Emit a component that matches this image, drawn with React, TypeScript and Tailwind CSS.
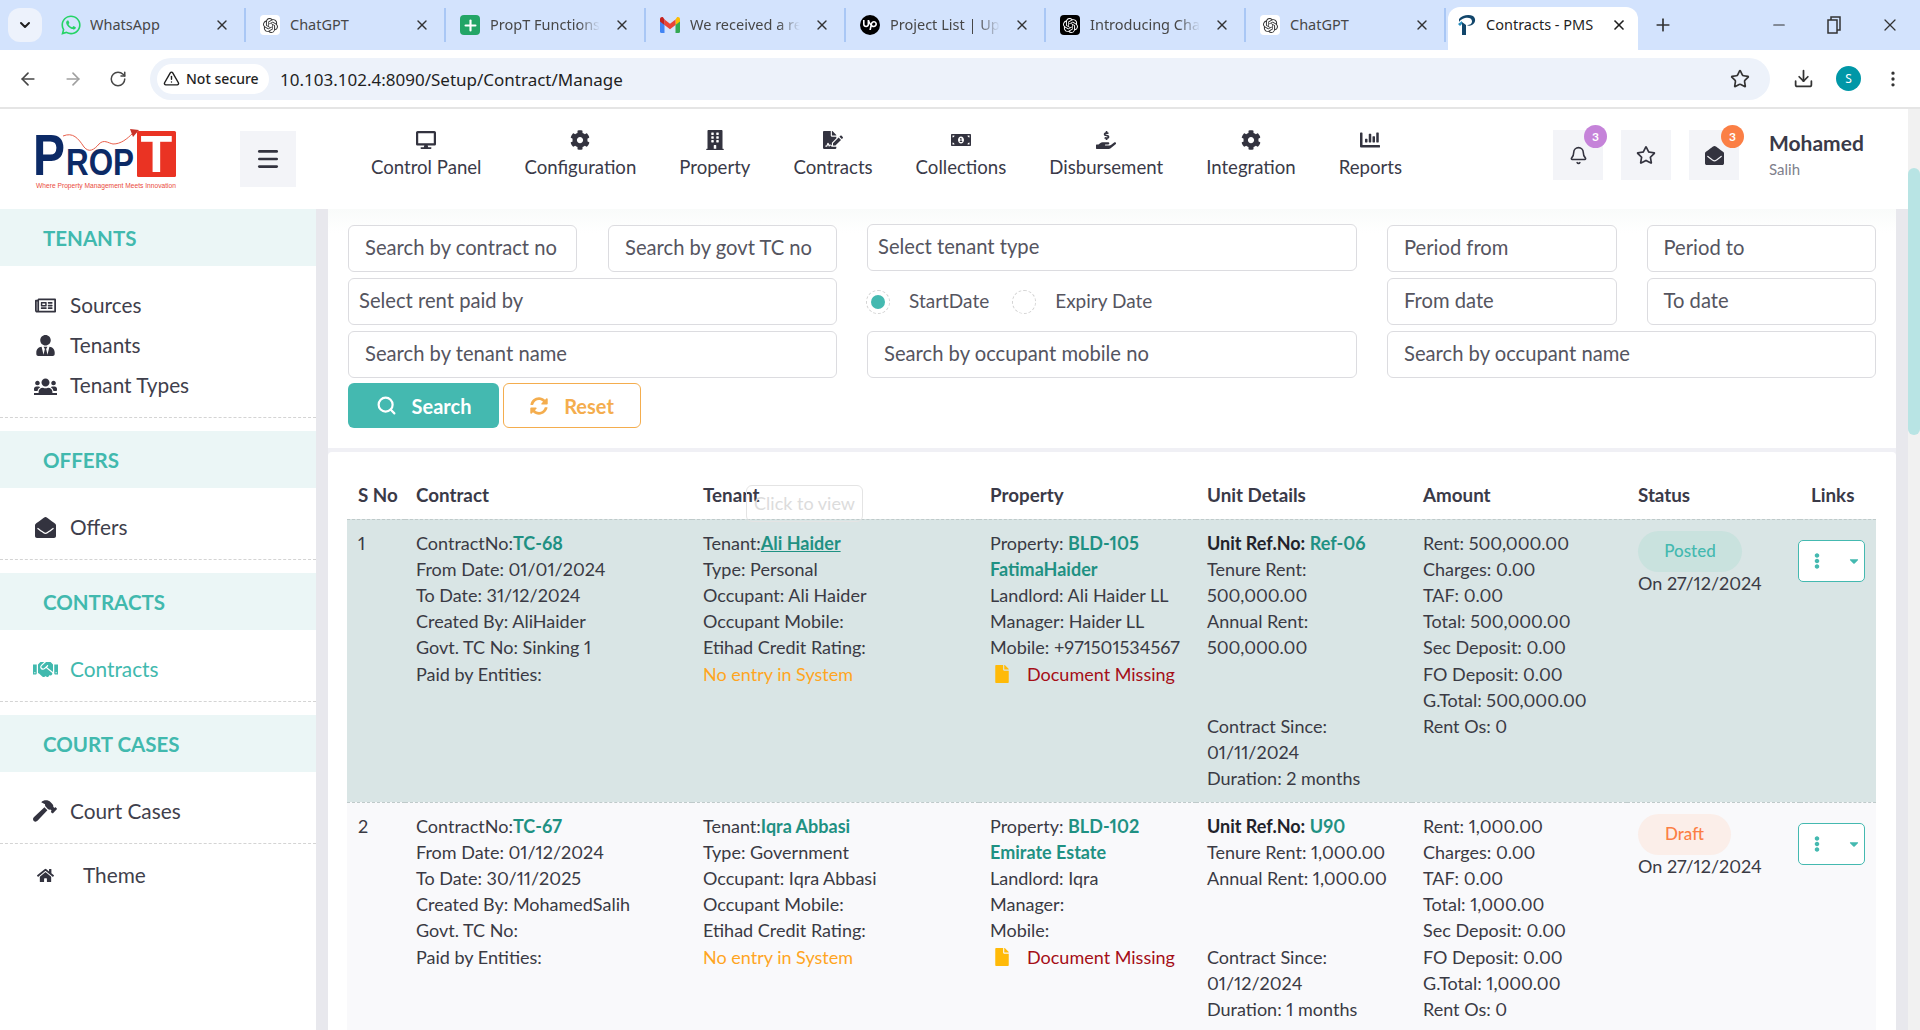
import React from 'react';
import { ArrowLeft, ArrowRight, RotateCw, Star, Download, MoreVertical, X, Plus, Minus, ChevronDown, TriangleAlert, Search, Bell, Menu } from 'lucide-react';
import {
  FaDesktop, FaCog, FaBuilding, FaFileSignature, FaMoneyBillAlt, FaHandHoldingUsd, FaChartBar,
  FaRegNewspaper, FaUserTie, FaUsers, FaEnvelopeOpen, FaHandshake, FaHammer, FaHome, FaSyncAlt,
  FaFile, FaEllipsisV, FaCaretDown, FaRegStar, FaWhatsapp,
} from 'react-icons/fa';
import { SiOpenai, SiUpwork } from 'react-icons/si';

const GptIcon = ({ dark }: { dark?: boolean }) => (
  <span className={`flex h-5 w-5 items-center justify-center rounded ${dark ? 'bg-black text-white' : 'bg-white text-[#333]'}`}>
    <SiOpenai size={15} />
  </span>
);

const SheetIcon = () => (
  <span className="flex h-5 w-5 items-center justify-center rounded-sm bg-[#23a566]">
    <Plus size={17} strokeWidth={3} className="text-white" />
  </span>
);

const GmailIcon = () => (
  <svg width="20" height="16" viewBox="0 0 20 16">
    <path d="M0 2v12.500A1.500 1.500 0 0 0 1.500 16H4.500V7z" fill="#4285f4" />
    <path d="M20 2v12.500a1.500 1.500 0 0 1-1.500 1.500H15.500V7z" fill="#34a853" />
    <path d="M15.500 2.500V8L20 4.500V2c0-1.800-2-2.500-3.200-1.600z" fill="#fbbc04" />
    <path d="M4.500 8V2.500L10 6.700l5.500-4.200V8L10 12.200z" fill="#ea4335" />
    <path d="M0 2v2.500L4.500 8V2.500L3.200.4C2 -.5 0 .2 0 2z" fill="#c5221f" />
  </svg>
);

const UpworkIcon = () => (
  <span className="flex h-5 w-5 items-center justify-center rounded-full bg-black text-white">
    <SiUpwork size={14} />
  </span>
);

const PmsIcon = () => (
  <svg width="20" height="22" viewBox="0 0 20 22">
    <path d="M2 5C5 1 12 0 16 2c3 2 3 7-1 9-2 1-4 1-5 0 3 0 5-1 5-4 0-3-4-4-7-3C5 5 3 6 2 8z" fill="#12466b" />
    <path d="M5 8l4 3v10H5z" fill="#12466b" />
    <path d="M1 10l4-3v3L3 12z" fill="#2a8fc0" />
  </svg>
);

const tabs = [
  { title: 'WhatsApp', icon: <FaWhatsapp size={22} className="text-[#25d366]" /> },
  { title: 'ChatGPT', icon: <GptIcon /> },
  { title: 'PropT Functions', icon: <SheetIcon />, fade: true },
  { title: 'We received a request', icon: <GmailIcon />, fade: true },
  { title: 'Project List | Upwork', icon: <UpworkIcon />, fade: true },
  { title: 'Introducing ChatGPT', icon: <GptIcon dark />, fade: true },
  { title: 'ChatGPT', icon: <GptIcon /> },
];

const BrowserChrome = () => (
  <div className="shrink-0 font-['Noto_Sans',sans-serif]">
    <div className="flex h-[50px] items-center bg-[#d3e3fd] pl-2">
      <div className="mr-[4px] flex h-[34px] w-[34px] items-center justify-center rounded-xl bg-[#edf2fc]">
        <ChevronDown size={16} strokeWidth={3} className="text-[#1f1f1f]" />
      </div>
      {tabs.map((tab, i) => (
        <div key={i} className="flex h-[34px] w-[200px] items-center border-r-2 border-[#a9c7f5] pl-[14px]">
          <span className="flex w-[30px] shrink-0 items-center">{tab.icon}</span>
          <span className={`w-[110px] overflow-hidden whitespace-nowrap text-[14.500px] text-[#474747] ${tab.fade ? '[mask-image:linear-gradient(to_right,black_80%,transparent)]' : ''}`}>
            {tab.title}
          </span>
          <X size={16} strokeWidth={2} className="ml-[14px] text-[#333]" />
        </div>
      ))}
      <div className="ml-[2px] flex h-[43px] w-[190px] items-center self-end rounded-t-[12px] bg-white pb-[7px] pl-[9px]">
        <span className="flex w-[29px] shrink-0"><PmsIcon /></span>
        <span className="w-[125px] whitespace-nowrap text-[14.500px] text-[#1f1f1f]">Contracts - PMS</span>
        <X size={16} strokeWidth={2.500} className="text-[#1f1f1f]" />
      </div>
      <Plus size={20} strokeWidth={2} className="ml-[15px] text-[#333]" />
      <div className="ml-auto flex items-center gap-[38px] pr-[20px] text-[#333]">
        <Minus size={18} strokeWidth={1.500} />
        <svg width="16" height="20" viewBox="0 0 16 20" fill="none" stroke="currentColor" strokeWidth="1.500"><rect x="2" y="5" width="9" height="13" /><path d="M5 5V2h9v13h-3" /></svg>
        <X size={20} strokeWidth={1.500} />
      </div>
    </div>
    <div className="flex h-[59px] items-center border-b-2 border-[#e5e5e5] bg-white">
      <ArrowLeft size={20} className="ml-[18px] text-[#474747]" />
      <ArrowRight size={20} className="ml-[25px] text-[#a0a0a0]" />
      <RotateCw size={18} className="ml-[26px] text-[#474747]" />
      <div className="ml-[23px] flex h-[42px] w-[1620px] items-center rounded-full bg-[#edf2fa] pl-[7px] pr-[20px]">
        <div className="flex h-[30px] w-[112px] items-center gap-[6px] rounded-full bg-white pl-[6px]">
          <TriangleAlert size={17} className="text-[#1f1f1f]" />
          <span className="text-[14px] font-medium text-[#1f1f1f]">Not secure</span>
        </div>
        <span className="ml-[11px] pt-[2px] text-[17px] text-[#1f1f1f]">10.103.102.4:8090/Setup/Contract/Manage</span>
        <Star size={20} className="ml-auto text-[#333]" />
      </div>
      <Download size={21} className="ml-[23px] text-[#333]" />
      <div className="ml-[22px] flex h-[25px] w-[25px] items-center justify-center rounded-full bg-[#0097a7] text-[12px] text-white">S</div>
      <MoreVertical size={20} className="ml-[22px] text-[#333]" />
    </div>
  </div>
);

const Logo = () => (
  <svg width="150" height="66" viewBox="0 0 150 66" className="ml-[30px] shrink-0">
    <text x="3" y="49" fontFamily="Liberation Sans" fontWeight="700" fontSize="58" textLength="32" lengthAdjust="spacingAndGlyphs" fill="#0c2a66">P</text>
    <text x="36" y="49" fontFamily="Liberation Sans" fontWeight="700" fontSize="37" textLength="68" lengthAdjust="spacingAndGlyphs" fill="#0c2a66">ROP</text>
    <path d="M33 10c10-4 15 2 21 11 5 6 10 3 15-3 5-5 9-1 14 0 8 0 14-5 20-11" fill="none" stroke="#e8604c" strokeWidth="1" />
    <path d="M100 3l9 1-6 7z" fill="#c8342a" />
    <rect x="107" y="5" width="39" height="46" rx="1.500" fill="#ea3323" />
    <text x="126.500" y="46" textAnchor="middle" fontFamily="Liberation Sans" fontWeight="700" fontSize="52" fill="#fff">T</text>
    <text x="6" y="62" fontFamily="Liberation Sans" fontSize="7.500" textLength="140" lengthAdjust="spacingAndGlyphs" fill="#ea4a3c">Where Property Management Meets Innovation</text>
  </svg>
);

const navItems = [
  { label: 'Control Panel', Icon: FaDesktop },
  { label: 'Configuration', Icon: FaCog },
  { label: 'Property', Icon: FaBuilding },
  { label: 'Contracts', Icon: FaFileSignature },
  { label: 'Collections', Icon: FaMoneyBillAlt },
  { label: 'Disbursement', Icon: FaHandHoldingUsd },
  { label: 'Integration', Icon: FaCog },
  { label: 'Reports', Icon: FaChartBar },
];

const Header = () => (
  <div className="flex h-[100px] shrink-0 items-center bg-white">
    <Logo />
    <div className="ml-[60px] flex h-14 w-14 items-center justify-center bg-[#f3f4f8]">
      <Menu size={26} strokeWidth={2.500} className="text-[#33333f]" />
    </div>
    <nav className="mb-[10px] ml-[75px] flex gap-[43px]">
      {navItems.map(({ label, Icon }) => (
        <div key={label} className="flex flex-col items-center gap-[5px]">
          <Icon size={20} className="text-[#33333f]" />
          <span className="whitespace-nowrap text-[18.600px] leading-[24px] text-[#3a3a48]">{label}</span>
        </div>
      ))}
    </nav>
    <div className="ml-auto flex items-center gap-[18px] pb-[8px]">
      <div className="relative flex h-[50px] w-[50px] items-center justify-center bg-[#f3f4f8]">
        <Bell size={19} className="text-[#33333f]" />
        <span className="absolute -right-[4px] -top-[5px] flex h-[23px] w-[23px] items-center justify-center rounded-full bg-[#c583d9] text-[12px] font-bold text-white">3</span>
      </div>
      <div className="flex h-[50px] w-[50px] items-center justify-center bg-[#f3f4f8]">
        <FaRegStar size={20} className="text-[#33333f]" />
      </div>
      <div className="relative flex h-[50px] w-[50px] items-center justify-center bg-[#f3f4f8]">
        <FaEnvelopeOpen size={19} className="text-[#33333f]" />
        <span className="absolute -right-[5px] -top-[5px] flex h-[23px] w-[23px] items-center justify-center rounded-full bg-[#fb7f45] text-[12px] font-bold text-white">3</span>
      </div>
      <div className="ml-[12px] w-[139px] pb-[2px]">
        <div className="text-[21px] font-bold leading-[26px] text-[#3a3a48]">Mohamed</div>
        <div className="mt-[3px] text-[15px] leading-[20px] text-[#80808c]">Salih</div>
      </div>
    </div>
  </div>
);

const sections = [
  {
    title: 'TENANTS',
    items: [
      { label: 'Sources', Icon: FaRegNewspaper, size: 21 },
      { label: 'Tenants', Icon: FaUserTie, size: 21 },
      { label: 'Tenant Types', Icon: FaUsers, size: 23, line: true },
    ],
  },
  { title: 'OFFERS', items: [{ label: 'Offers', Icon: FaEnvelopeOpen, size: 21 }] },
  { title: 'CONTRACTS', items: [{ label: 'Contracts', Icon: FaHandshake, size: 25, active: true }] },
  { title: 'COURT CASES', items: [{ label: 'Court Cases', Icon: FaHammer, size: 24 }] },
];

const Sidebar = () => (
  <aside className="w-[316px] shrink-0 bg-white">
    {sections.map((section) => (
      <div key={section.title} className="mb-[13px] border-b border-dashed border-[#d4d4d4]">
        <div className="flex h-[57px] items-center bg-[#ebf6f6] pl-[43px] pt-[2px] text-[20.500px] font-bold text-[#41b9ae]">{section.title}</div>
        <div className="flex flex-col gap-[4px] pb-[14px] pt-[21px]">
          {section.items.map(({ label, Icon, size, line, active }: any) => (
            <div key={label} className={`flex h-[36px] items-center ${active ? 'text-[#41b9ae]' : 'text-[#3f3f4c]'}`}>
              <span className="flex w-[70px] justify-center pl-[20px]">
                <span className={`flex ${line ? 'h-[20px] items-start border-b-2 border-[#33333f]' : ''}`}>
                  <Icon size={size} className={active ? 'text-[#41b9ae]' : 'text-[#33333f]'} />
                </span>
              </span>
              <span className="pb-[1px] text-[20.800px]">{label}</span>
            </div>
          ))}
        </div>
      </div>
    ))}
    <div className="mt-[6px] flex h-[36px] items-center text-[#3f3f4c]">
      <span className="flex w-[70px] justify-center pl-[20px]"><FaHome size={17} className="text-[#33333f]" /></span>
      <span className="ml-[13px] text-[20.800px]">Theme</span>
    </div>
  </aside>
);

const Field = ({ text, className = '' }: { text: string; className?: string }) => (
  <div className={`flex h-[47px] items-center rounded-[6px] border border-[#dcdce0] bg-white pb-[2px] pl-[16px] text-[20.200px] text-[#55555f] ${className}`}>{text}</div>
);

const Filters = () => (
  <div className="bg-gradient-to-b from-[#f9fbfa] to-white to-[10%] px-[20px] pb-[20px] pt-[16px]">
    <div className="grid grid-cols-[489px_490px_489px] gap-x-[30px] gap-y-[6px]">
      <div className="grid grid-cols-2 gap-x-[31px]">
        <Field text="Search by contract no" />
        <Field text="Search by govt TC no" />
      </div>
      <Field text="Select tenant type" className="!pl-[10px] -mt-[1px]" />
      <div className="grid grid-cols-2 gap-x-[30px]">
        <Field text="Period from" />
        <Field text="Period to" />
      </div>
      <Field text="Select rent paid by" className="!pl-[10px]" />
      <div className="flex items-center text-[19px] text-[#55555f]">
        <span className="flex h-[24px] w-[24px] -translate-x-[1px] items-center justify-center rounded-full border border-dashed border-[#d4d4d4]">
          <span className="h-[14px] w-[14px] rounded-full bg-[#44b9b0]" />
        </span>
        <span className="ml-[18px]">StartDate</span>
        <span className="ml-[23px] h-[24px] w-[24px] rounded-full border border-dashed border-[#d4d4d4]" />
        <span className="ml-[19px]">Expiry Date</span>
      </div>
      <div className="grid grid-cols-2 gap-x-[30px]">
        <Field text="From date" />
        <Field text="To date" />
      </div>
      <Field text="Search by tenant name" />
      <Field text="Search by occupant mobile no" />
      <Field text="Search by occupant name" />
    </div>
    <div className="mt-[5px] flex gap-[4px]">
      <div className="flex h-[45px] w-[151px] items-center justify-center gap-[15px] rounded-[6px] bg-[#44b9b0] text-[20px] font-bold text-white">
        <Search size={21} strokeWidth={2.500} />
        Search
      </div>
      <div className="flex h-[45px] w-[138px] items-center justify-center gap-[16px] rounded-[6px] border border-[#f4ad4e] text-[20px] font-bold text-[#f4ad4e]">
        <FaSyncAlt size={18} />
        Reset
      </div>
    </div>
  </div>
);

const L = ({ children }: { children?: React.ReactNode }) => <div className="min-h-[26.2px]">{children}</div>;
const Lnk = ({ children, u }: { children: React.ReactNode; u?: boolean }) => (
  <span className={`font-bold text-[#1f9183] ${u ? 'underline' : ''}`}>{children}</span>
);

const DocMissing = () => (
  <div className="flex items-center">
    <FaFile size={18} className="ml-[3px] text-[#ffba08]" />
    <span className="ml-[16px] text-[#a50e17]">Document Missing</span>
  </div>
);

const rows = [
  {
    no: 1, bg: 'bg-[#d9e5e5]', contractNo: 'TC-68', lines: ['From Date: 01/01/2024', 'To Date: 31/12/2024', 'Created By: AliHaider', 'Govt. TC No: Sinking 1', 'Paid by Entities:'],
    tenant: 'Ali Haider', underline: true, tenantLines: ['Type: Personal', 'Occupant: Ali Haider', 'Occupant Mobile:', 'Etihad Credit Rating:'],
    bld: 'BLD-105', prop: 'FatimaHaider', propLines: ['Landlord: Ali Haider LL', 'Manager: Haider LL', 'Mobile: +971501534567'],
    ref: 'Ref-06', unit: ['Tenure Rent:', '500,000.00', 'Annual Rent:', '500,000.00'], since: ['Contract Since:', '01/11/2024', 'Duration: 2 months'],
    amount: ['Rent: 500,000.00', 'Charges: 0.00', 'TAF: 0.00', 'Total: 500,000.00', 'Sec Deposit: 0.00', 'FO Deposit: 0.00', 'G.Total: 500,000.00', 'Rent Os: 0'],
    status: 'Posted', pill: 'w-[104px] bg-[#c9e2de] text-[#44b9b0]',
  },
  {
    no: 2, bg: 'bg-[#f9f9fb]', contractNo: 'TC-67', lines: ['From Date: 01/12/2024', 'To Date: 30/11/2025', 'Created By: MohamedSalih', 'Govt. TC No:', 'Paid by Entities:'],
    tenant: 'Iqra Abbasi', underline: false, tenantLines: ['Type: Government', 'Occupant: Iqra Abbasi', 'Occupant Mobile:', 'Etihad Credit Rating:'],
    bld: 'BLD-102', prop: 'Emirate Estate', propLines: ['Landlord: Iqra', 'Manager:', 'Mobile:'],
    ref: 'U90', unit: ['Tenure Rent: 1,000.00', 'Annual Rent: 1,000.00'], since: ['Contract Since:', '01/12/2024', 'Duration: 1 months'],
    amount: ['Rent: 1,000.00', 'Charges: 0.00', 'TAF: 0.00', 'Total: 1,000.00', 'Sec Deposit: 0.00', 'FO Deposit: 0.00', 'G.Total: 1,000.00', 'Rent Os: 0'],
    status: 'Draft', pill: 'w-[93px] bg-[#fbeee9] text-[#fb7f45]',
  },
];

const ContractsTable = () => (
  <div className="relative mt-[4px] flex-1 rounded-t-[4px] bg-white px-[19px] pt-[20px]">
    <table className="w-[1529px] table-fixed border-collapse text-left text-[18px] leading-[26.2px] text-[#3a3a44] proportional-nums">
      <colgroup>
        <col className="w-[58px]" />
        <col className="w-[287px]" />
        <col className="w-[287px]" />
        <col className="w-[217px]" />
        <col className="w-[216px]" />
        <col className="w-[215px]" />
        <col className="w-[173px]" />
        <col className="w-[76px]" />
      </colgroup>
      <thead>
        <tr className="h-[47px] border-b border-dashed border-[#bfcaca] text-[18.800px] font-bold text-[#3a3a48]">
          {['S No', 'Contract', 'Tenant', 'Property', 'Unit Details', 'Amount', 'Status', 'Links'].map((h) => (
            <th key={h} className="whitespace-nowrap px-[11px] font-bold">{h}</th>
          ))}
        </tr>
      </thead>
      <tbody>
        {rows.map((r) => (
          <tr key={r.no} className={`${r.bg} border-b border-dashed border-[#bfcaca] align-top`}>
            <td className="px-[11px] pb-[10px] pt-[10px]">{r.no}</td>
            <td className="px-[11px] pb-[10px] pt-[10px]">
              <L>ContractNo:<Lnk>{r.contractNo}</Lnk></L>
              {r.lines.map((l) => <L key={l}>{l}</L>)}
            </td>
            <td className="px-[11px] pb-[10px] pt-[10px]">
              <L>Tenant:<Lnk u={r.underline}>{r.tenant}</Lnk></L>
              {r.tenantLines.map((l) => <L key={l}>{l}</L>)}
              <L><span className="text-[#ffa51f]">No entry in System</span></L>
            </td>
            <td className="whitespace-nowrap px-[11px] pb-[10px] pt-[10px]">
              <L>Property: <Lnk>{r.bld}</Lnk></L>
              <L><Lnk>{r.prop}</Lnk></L>
              {r.propLines.map((l) => <L key={l}>{l}</L>)}
              <DocMissing />
            </td>
            <td className="whitespace-nowrap px-[11px] pb-[10px] pt-[10px]">
              <L><b className="text-[#22222a]">Unit Ref.No:</b> <Lnk>{r.ref}</Lnk></L>
              {r.unit.map((l, i) => <L key={i}>{l}</L>)}
              <div className="h-[52.400px]" />
              {r.since.map((l) => <L key={l}>{l}</L>)}
            </td>
            <td className="whitespace-nowrap px-[11px] pb-[10px] pt-[10px]">
              {r.amount.map((l) => <L key={l}>{l}</L>)}
            </td>
            <td className="whitespace-nowrap px-[11px] pb-[10px] pt-[11px]">
              <div className={`flex h-[41px] items-center justify-center rounded-full text-[17px] font-medium ${r.pill}`}>{r.status}</div>
              <div className="-mt-[2px]">On 27/12/2024</div>
            </td>
            <td className="pb-[10px] pt-[20px]">
              <div className="-ml-[2px] flex h-[42px] w-[67px] items-center rounded-[5px] border border-[#44b9b0] bg-white pl-[10px] text-[#44b9b0]">
                <FaEllipsisV size={16} />
                <FaCaretDown size={14} className="ml-[22px]" />
              </div>
            </td>
          </tr>
        ))}
      </tbody>
    </table>
    <div className="absolute left-[418px] top-[33px] flex h-[37px] w-[117px] items-center justify-center rounded-[6px] border border-[#e4e4e4] text-[18px] text-[#dcdcdc]">
      Click to view
    </div>
  </div>
);

export default function App() {
  return (
    <div className="flex h-[1030px] w-[1920px] flex-col overflow-hidden bg-white font-['Lato',sans-serif]">
      <BrowserChrome />
      <div className="relative flex min-h-0 flex-1 flex-col pr-[12px]">
        <Header />
        <div className="flex min-h-0 flex-1 bg-[#e8e8ed]">
          <Sidebar />
          <main className="ml-[12px] mr-[12px] flex min-w-0 flex-1 flex-col bg-[#f0f0f5]">
            <Filters />
            <ContractsTable />
          </main>
        </div>
        <div className="absolute bottom-0 right-0 top-0 w-[12px] bg-[#f1f1f1]">
          <div className="mt-[59px] h-[267px] rounded-full bg-[#b8e4e4]" />
        </div>
      </div>
    </div>
  );
}
